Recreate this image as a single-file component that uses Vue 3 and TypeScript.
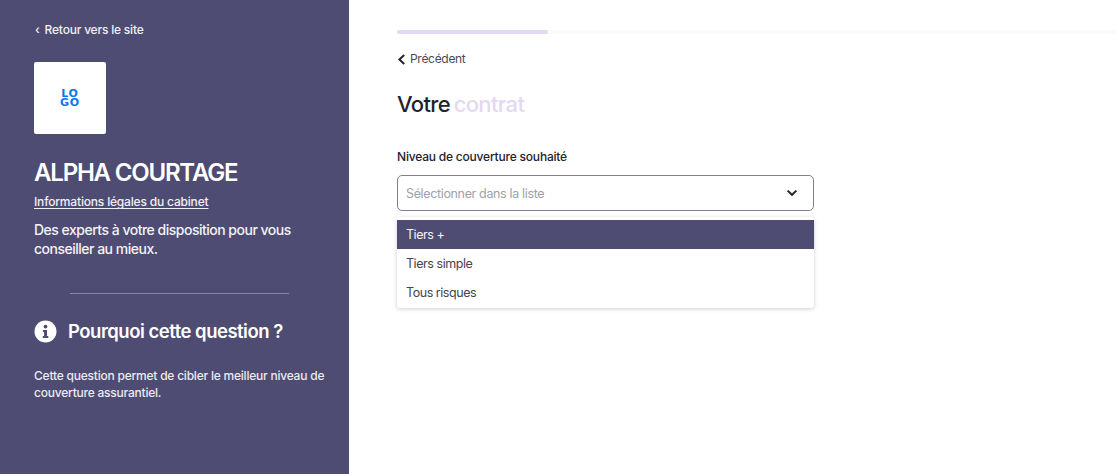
<script setup lang="ts">
const options: string[] = ['Tiers +', 'Tiers simple', 'Tous risques']
</script>

<template>
  <div class="page">
    <aside class="side">
      <a class="back"><span class="back-mark">‹</span> Retour vers le site</a>
      <div class="logo"><span class="logo-text">LOGO</span></div>
      <h1 class="brand">ALPHA COURTAGE</h1>
      <a class="legal">Informations légales du cabinet</a>
      <p class="tagline">Des experts à votre disposition pour vous conseiller au mieux.</p>
      <div class="rule"></div>
      <div class="why">
        <svg class="info" width="23" height="23" viewBox="0 0 23 23">
          <circle cx="11.5" cy="11.5" r="11" fill="#fff" />
          <circle cx="11.5" cy="6.6" r="1.9" fill="#4e4c72" />
          <path d="M8.9 10h4.1v6h1.3v1.9H8.8V16h1.3v-4.1H8.9z" fill="#4e4c72" />
        </svg>
        <h2>Pourquoi cette question ?</h2>
      </div>
      <p class="explain">Cette question permet de cibler le meilleur niveau de couverture assurantiel.</p>
    </aside>
    <main class="main">
      <div class="progress"><div class="progress-fill"></div></div>
      <a class="prev">
        <svg width="9" height="11" viewBox="0 0 9 11"><path d="M7.2 1 2.4 5.5l4.8 4.5" fill="none" stroke="#24232f" stroke-width="2" /></svg>
        Précédent
      </a>
      <h2 class="title">Votre <span>contrat</span></h2>
      <label class="label">Niveau de couverture souhaité</label>
      <div class="select">
        <span>Sélectionner dans la liste</span>
        <svg width="12" height="8" viewBox="0 0 12 8"><path d="M1.6 1.6 6 5.8l4.4-4.2" fill="none" stroke="#24232f" stroke-width="2" /></svg>
      </div>
      <ul class="menu">
        <li v-for="(o, i) in options" :key="o" :class="{ active: i === 0 }">{{ o }}</li>
      </ul>
    </main>
  </div>
</template>

<style>
html, body { margin: 0; background: #fff; }
</style>

<style scoped>
.page {
  display: flex;
  height: 474px;
  overflow: hidden;
  font-family: Inter, "Liberation Sans", sans-serif;
}
.side {
  box-sizing: border-box;
  width: 349px;
  flex: none;
  background: #4e4c72;
  color: #fff;
  padding: 22px 24px 0 34px;
}
.back {
  display: block;
  font-size: 12px;
  line-height: 16px;
  letter-spacing: -0.2px;
  font-weight: 500;
  color: #f1f0f6;
}
.back-mark { margin: 0 2px 0 1px; }
.logo {
  width: 72px;
  height: 72px;
  margin-top: 24px;
  background: #fff;
  border-radius: 2px;
  display: flex;
  align-items: center;
  justify-content: center;
}
.logo-text {
  display: block;
  width: 22px;
  word-break: break-all;
  text-align: center;
  color: #0a76e8;
  font-family: "DejaVu Sans", sans-serif;
  font-size: 11px;
  font-weight: 700;
  line-height: 9px;
  letter-spacing: 0.8px;
}
.brand {
  margin: 24px 0 0;
  font-size: 24px;
  line-height: 30px;
  font-weight: 600;
  letter-spacing: -1.2px;
}
.legal {
  display: block;
  margin-top: 6px;
  font-size: 12px;
  line-height: 16px;
  letter-spacing: -0.18px;
  font-weight: 500;
  text-decoration: underline;
  text-underline-offset: 2px;
  text-decoration-thickness: 1px;
  color: #f1f0f6;
}
.tagline {
  margin: 10px 0 0;
  font-size: 14px;
  line-height: 19px;
  letter-spacing: -0.5px;
  font-weight: 500;
  color: #f4f3f8;
}
.rule {
  width: 219px;
  height: 1px;
  margin: 35px 0 0 36px;
  background: #86849f;
}
.why {
  display: flex;
  align-items: center;
  gap: 11px;
  margin-top: 25px;
}
.why h2 {
  margin: 0;
  font-size: 18.5px;
  line-height: 24px;
  font-weight: 600;
  letter-spacing: -0.5px;
}
.explain {
  margin: 24px 0 0;
  font-size: 12px;
  line-height: 17px;
  letter-spacing: -0.22px;
  font-weight: 500;
  color: #eceaf2;
}
.main {
  flex: 1;
  padding: 30px 0 0 48px;
  min-width: 0;
}
.progress {
  height: 4px;
  background: #fafafa;
  border-radius: 2px;
}
.progress-fill {
  width: 151px;
  height: 4px;
  background: #e4d8f2;
  border-radius: 2px;
}
.prev {
  display: flex;
  align-items: center;
  gap: 4px;
  margin-top: 17px;
  font-size: 12px;
  line-height: 16px;
  letter-spacing: -0.3px;
  color: #4a4a58;
}
.title {
  margin: 22px 0 0;
  font-size: 22px;
  line-height: 30px;
  font-weight: 500;
  letter-spacing: -0.65px;
  word-spacing: -1.5px;
  color: #23222c;
}
.title span { color: #e3d8f0; }
.label {
  display: block;
  margin-top: 30px;
  font-size: 12px;
  line-height: 16px;
  font-weight: 500;
  letter-spacing: -0.2px;
  color: #23222c;
}
.select {
  box-sizing: border-box;
  width: 417px;
  height: 36px;
  margin-top: 10px;
  padding: 0 15px 0 8px;
  border: 1px solid #7f7d9c;
  border-radius: 5px;
  display: flex;
  align-items: center;
  justify-content: space-between;
  font-size: 12.5px;
  letter-spacing: -0.35px;
  color: #a0a0aa;
}
.menu {
  box-sizing: border-box;
  width: 417px;
  margin: 6px 0 0;
  padding: 3px 0 1px;
  list-style: none;
  background: #fff;
  border-radius: 3px;
  box-shadow: 0 1px 4px rgba(40, 40, 60, 0.22);
  font-size: 12.5px;
  letter-spacing: -0.45px;
  color: #45444f;
}
.menu li {
  height: 29px;
  line-height: 29px;
  padding-left: 9px;
}
.menu li.active {
  background: #4e4c72;
  color: #f4f3f8;
}
</style>
